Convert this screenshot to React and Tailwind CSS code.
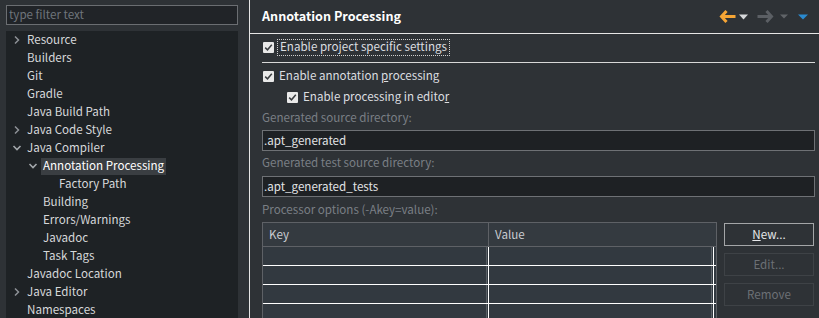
import React from 'react';

const FONT = { fontFamily: '"Noto Sans CJK KR", "Noto Sans", sans-serif' };

const tree = [
  { label: 'Resource', level: 0, arrow: 'right' },
  { label: 'Builders', level: 0 },
  { label: 'Git', level: 0 },
  { label: 'Gradle', level: 0 },
  { label: 'Java Build Path', level: 0 },
  { label: 'Java Code Style', level: 0, arrow: 'right' },
  { label: 'Java Compiler', level: 0, arrow: 'down' },
  { label: 'Annotation Processing', level: 1, arrow: 'down', selected: true },
  { label: 'Factory Path', level: 2 },
  { label: 'Building', level: 1 },
  { label: 'Errors/Warnings', level: 1 },
  { label: 'Javadoc', level: 1 },
  { label: 'Task Tags', level: 1 },
  { label: 'Javadoc Location', level: 0 },
  { label: 'Java Editor', level: 0, arrow: 'right' },
  { label: 'Namespaces', level: 0 },
];

const Chevron = ({ dir }) =>
  dir === 'down' ? (
    <svg className="ml-[0px]" width="10" height="8" viewBox="0 0 10 8">
      <polyline points="1.5,2 5,5.5 8.5,2" fill="none" stroke="#a3a7ab" strokeWidth="1.6" />
    </svg>
  ) : (
    <svg className="ml-[1px]" width="8" height="10" viewBox="0 0 8 10">
      <polyline points="2,1.5 5.5,5 2,8.5" fill="none" stroke="#8d9196" strokeWidth="1.5" />
    </svg>
  );

const Check = ({ left = 0 }) => (
  <span className="flex h-[11px] w-[11px] shrink-0 items-center justify-center rounded-[1px] bg-[#e9e9e9]" style={{ marginLeft: left }}>
    <svg width="9" height="9" viewBox="0 0 9 9">
      <polyline points="1.2,4.6 3.5,6.8 7.8,1.8" fill="none" stroke="#3a3d40" strokeWidth="1.5" />
    </svg>
  </span>
);

const TreeRow = ({ item }) => {
  const pad = 6 + item.level * 16;
  return (
    <div className="flex h-[18px] items-center" style={{ paddingLeft: pad }}>
      <span className="flex w-[13px] items-center">
        {item.arrow && <Chevron dir={item.arrow} />}
      </span>
      <span
        className={
          'flex h-[17px] items-center px-[2px] text-[11.6px] leading-none ' +
          (item.selected ? 'bg-[#3a3e42] text-white' : 'text-[#d6d8da]')
        }
      >
        {item.label}
      </span>
    </div>
  );
};

const TableRow = () => (
  <div className="flex h-[19px] shrink-0 border-b border-white">
    <div className="w-[224px] border-r border-[#5b6167]" />
    <div className="w-[1px]" />
    <div className="w-[1px] bg-white" />
    <div className="w-[223px] border-r border-[#5b6167]" />
    <div className="w-[1px]" />
    <div className="w-[1px] bg-white" />
  </div>
);

export default function App() {
  return (
    <div className="flex h-[318px] w-[819px] overflow-hidden bg-[#2e3236]" style={FONT}>
      {/* left: filter + tree */}
      <div className="flex w-[249px] shrink-0 flex-col pl-[6px] pr-[11px] pt-[5px]">
        <div className="flex h-[20px] shrink-0 items-center border border-[#6b6e72] bg-[#212428] px-[2px] text-[11.6px] leading-none text-[#6f757b]">
          type filter text
        </div>
        <div className="mt-[6px] flex-1 bg-[#1e2225]">
          {tree.map((item) => (
            <TreeRow key={item.label} item={item} />
          ))}
        </div>
      </div>
      <div className="w-[1px] shrink-0 bg-[#e6e6e6]" />

      {/* right: page */}
      <div className="flex min-w-0 flex-1 flex-col overflow-hidden">
        <div className="flex h-[34px] shrink-0 items-center justify-between border-b border-[#e6e6e6] pl-[12px] pr-[11px]">
          <span className="text-[12.6px] font-bold leading-none text-white">Annotation Processing</span>
          <div className="flex items-center">
            <svg width="17" height="15" viewBox="0 0 17 15">
              <polyline points="7.5,2 2.5,7.5 7.5,13" fill="none" stroke="#f6a535" strokeWidth="3" />
              <line x1="3" y1="7.5" x2="16.5" y2="7.5" stroke="#f6a535" strokeWidth="3" />
            </svg>
            <svg className="ml-[3px]" width="9" height="6" viewBox="0 0 9 6">
              <polygon points="0,0.5 9,0.5 4.5,5.5" fill="#d6d8da" />
            </svg>
            <svg className="ml-[9px]" width="17" height="15" viewBox="0 0 17 15">
              <polyline points="9.5,2 14.5,7.5 9.5,13" fill="none" stroke="#5b5f64" strokeWidth="3" />
              <line x1="0.5" y1="7.5" x2="14" y2="7.5" stroke="#5b5f64" strokeWidth="3" />
            </svg>
            <svg className="ml-[6px]" width="8" height="5" viewBox="0 0 8 5">
              <polygon points="0,0.5 8,0.5 4,4.5" fill="#606468" />
            </svg>
            <svg className="ml-[10px]" width="10" height="6" viewBox="0 0 10 6">
              <polygon points="0,0.5 10,0.5 5,5.5" fill="#2a8ad0" />
            </svg>
          </div>
        </div>

        <div className="flex shrink-0 flex-col pl-[12px] pr-[4px] text-[11.6px] leading-none">
          <div className="mt-[4px] flex h-[18px] shrink-0 items-center">
            <Check left={1} />
            <span className="ml-[3px] flex h-[17px] items-center border border-dotted border-[#d0d0d0] px-[2px] text-[#dcdee0]">
              Enable pro<span className="underline">j</span>ect specific settings
            </span>
          </div>
          <div className="mt-[6px] h-[1px] shrink-0 bg-[#d8d8d8]" />
          <div className="mt-[4px] flex h-[18px] shrink-0 items-center">
            <Check left={1} />
            <span className="ml-[5px] text-[#dcdee0]">
              Enable annotation <span className="underline">p</span>rocessing
            </span>
          </div>
          <div className="mt-[3px] flex h-[18px] shrink-0 items-center">
            <Check left={25} />
            <span className="ml-[5px] text-[#dcdee0]">
              Enable processing in edito<span className="underline">r</span>
            </span>
          </div>
          <div className="mt-[6px] h-[12px] shrink-0 text-[#7a7f85]">Generated source directory:</div>
          <div className="mt-[6px] flex h-[21px] shrink-0 items-center border border-[#6e7175] bg-[#1e2124] px-[1px] text-[#e2e4e6]">
            .apt_generated
          </div>
          <div className="mt-[6px] h-[12px] shrink-0 text-[#7a7f85]">Generated test source directory:</div>
          <div className="mt-[7px] flex h-[21px] shrink-0 items-center border border-[#6e7175] bg-[#1e2124] px-[1px] text-[#e2e4e6]">
            .apt_generated_tests
          </div>
          <div className="mt-[7px] h-[12px] shrink-0 text-[#7a7f85]">Processor options (-Akey=value):</div>

          <div className="mt-[6px] flex shrink-0 gap-[7px]">
            <div className="w-[455px] shrink-0 border border-[#5e6166]">
              <div className="flex h-[24px] border-b border-[#5e6166] bg-[#343a40] text-[#c9ccd0]">
                <div className="flex w-[226px] items-center border-r border-[#5e6166] pl-[6px]">Key</div>
                <div className="flex items-center pl-[6px]">Value</div>
              </div>
              <div className="bg-[#323940]">
                <TableRow />
                <TableRow />
                <TableRow />
                <TableRow />
              </div>
            </div>
            <div className="flex w-[90px] shrink-0 flex-col gap-[7px] pt-[1px]">
              <div className="flex h-[23px] items-center justify-center border border-[#a4a6a8] text-[#e6e8ea]">
                <span className="underline">N</span>ew...
              </div>
              <div className="flex h-[23px] items-center justify-center border border-[#3e4246] text-[#6c7075]">
                Edit...
              </div>
              <div className="flex h-[23px] items-center justify-center border border-[#3e4246] text-[#6c7075]">
                Remove
              </div>
            </div>
          </div>
        </div>
      </div>
    </div>
  );
}
